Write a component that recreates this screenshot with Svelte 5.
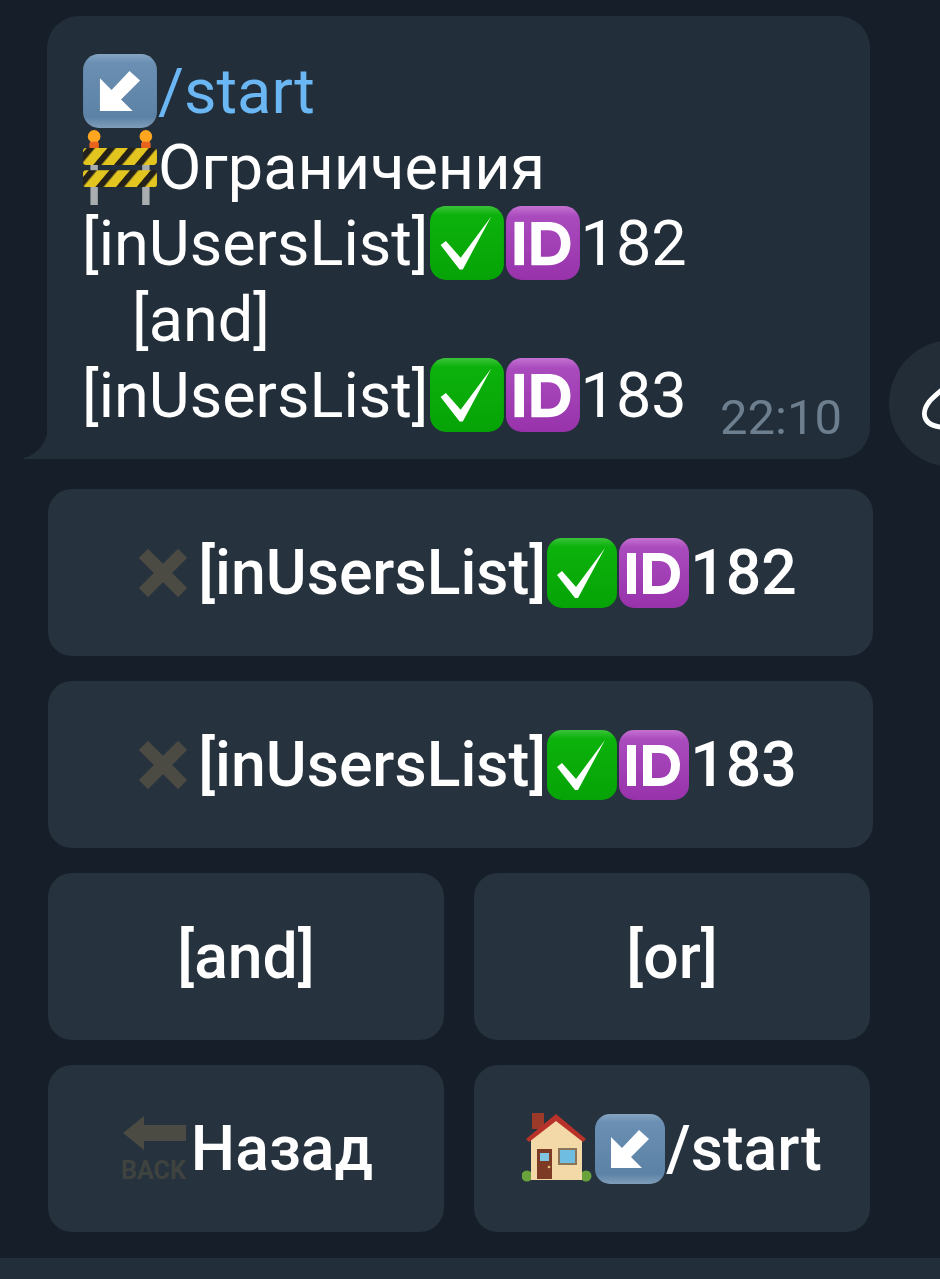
<script lang="ts">
  const conditions = ['182', '183'];
</script>

{#snippet keycap()}
  <svg class="emoji" viewBox="0 0 72 72" aria-hidden="true">
    <defs>
      <linearGradient id="cap" x1="0" y1="0" x2="0" y2="1">
        <stop offset="0" stop-color="#86a5c2" />
        <stop offset="0.12" stop-color="#6a8fb2" />
        <stop offset="0.85" stop-color="#5c82a6" />
        <stop offset="1" stop-color="#7f9db9" />
      </linearGradient>
    </defs>
    <rect x="1" y="1" width="70" height="70" rx="15" fill="url(#cap)" />
    <path d="M17 24 V55 H48 L37 44 L55 26 L45 17 L28 35 Z" fill="#fff" />
  </svg>
{/snippet}

{#snippet barrier()}
  <svg class="emoji" viewBox="0 0 72 72" aria-hidden="true">
    <defs>
      <pattern id="stripes" width="15" height="15" patternUnits="userSpaceOnUse" patternTransform="rotate(40)">
        <rect width="15" height="15" fill="#e3c51f" />
        <rect width="6" height="15" fill="#23211a" />
      </pattern>
    </defs>
    <rect x="8" y="6" width="7" height="66" fill="#a9adb0" />
    <rect x="57" y="6" width="7" height="66" fill="#a9adb0" />
    <circle cx="11.5" cy="7" r="6" fill="#ffa51f" />
    <circle cx="60.5" cy="7" r="6" fill="#ffa51f" />
    <rect x="7" y="12" width="9" height="7" rx="2" fill="#e8641e" />
    <rect x="56" y="12" width="9" height="7" rx="2" fill="#e8641e" />
    <rect x="1" y="18" width="70" height="16" rx="3" fill="url(#stripes)" />
    <rect x="1" y="39" width="70" height="16" rx="3" fill="url(#stripes)" />
  </svg>
{/snippet}

{#snippet check()}
  <svg class="emoji" viewBox="0 0 72 72" aria-hidden="true">
    <defs>
      <linearGradient id="green" x1="0" y1="0" x2="0" y2="1">
        <stop offset="0" stop-color="#3bc33b" />
        <stop offset="0.12" stop-color="#0cb20c" />
        <stop offset="1" stop-color="#06a306" />
      </linearGradient>
    </defs>
    <rect x="1" y="1" width="70" height="70" rx="15" fill="url(#green)" />
    <path d="M11 38 L16 34 L30 50 L59 11 L32 61 L29 61 Z" fill="#fff" />
  </svg>
{/snippet}

{#snippet idBadge()}
  <svg class="emoji" viewBox="0 0 72 72" aria-hidden="true">
    <defs>
      <linearGradient id="purple" x1="0" y1="0" x2="0" y2="1">
        <stop offset="0" stop-color="#c570d2" />
        <stop offset="0.14" stop-color="#a94bbd" />
        <stop offset="1" stop-color="#9832ab" />
      </linearGradient>
    </defs>
    <rect x="1" y="1" width="70" height="70" rx="15" fill="url(#purple)" />
    <rect x="9" y="16" width="9" height="41" fill="#fff" />
    <path d="M25 16 H41 C54 16 62 24 62 36 C62 49 54 57 41 57 H25 Z M34 24 V49 H41 C49 49 53 44 53 36 C53 29 49 24 41 24 Z" fill="#fff" fill-rule="evenodd" />
  </svg>
{/snippet}

{#snippet cross()}
  <svg class="emoji" viewBox="0 0 72 72" aria-hidden="true">
    <path d="M24 21 L54 51 M54 21 L24 51" stroke="#4b4a43" stroke-width="13" stroke-linecap="square" />
  </svg>
{/snippet}

{#snippet back()}
  <svg class="emoji" viewBox="0 0 72 72" aria-hidden="true">
    <path d="M4 20 L25 3 V12 H67 V28 H25 V37 Z" fill="#4b4a43" />
    <text x="2" y="66" class="back-word">BACK</text>
  </svg>
{/snippet}

{#snippet house()}
  <svg class="emoji" viewBox="0 0 72 72" aria-hidden="true">
    <circle cx="5" cy="63" r="5.5" fill="#6aa33c" />
    <circle cx="64" cy="63" r="5.5" fill="#6aa33c" />
    <rect x="10" y="0" width="12" height="16" fill="#9c3a2a" />
    <path d="M34 5 L60 26 V67 H9 V26 Z" fill="#f3d9a8" />
    <path d="M4 26 L34 1 L64 26 L61 29 L34 8 L7 29 Z" fill="#b8322a" />
    <rect x="15" y="36" width="15" height="30" fill="#7d3a24" />
    <rect x="18" y="40" width="9" height="8" fill="#7fc4e0" />
    <rect x="36" y="35" width="19" height="17" fill="#8a7558" />
    <rect x="38" y="37" width="15" height="13" fill="#6fbde0" />
    <circle cx="27" cy="54" r="1.3" fill="#e8c37a" />
  </svg>
{/snippet}

<main class="chat">
  <div class="message-row">
    <article class="bubble">
      <svg class="tail" viewBox="0 0 24 30" aria-hidden="true">
        <path d="M24 0 C23 14 12 26 0 29 L0 30 H24 Z" />
      </svg>
      <div class="line">{@render keycap()}<span class="link">/start</span></div>
      <div class="line">{@render barrier()}<span>Ограничения</span></div>
      <div class="line">
        <span>[inUsersList]</span>{@render check()}{@render idBadge()}<span>182</span>
      </div>
      <div class="line indented"><span>[and]</span></div>
      <div class="line last">
        <span>[inUsersList]</span>{@render check()}{@render idBadge()}<span>183</span>
        <time>22:10</time>
      </div>
    </article>
    <button class="share" aria-label="Поделиться">
      <svg viewBox="0 0 60 60" aria-hidden="true">
        <path d="M36 2 C30 10 14 20 8 28 C2 36 2 44 8 49 C13 53 22 54 36 54" />
      </svg>
    </button>
  </div>

  <div class="keyboard">
    {#each conditions as id}
      <div class="key-row wide">
        <button class="key">
          {@render cross()}
          <span class="gap">[inUsersList]</span>{@render check()}{@render idBadge()}<span>{id}</span>
        </button>
      </div>
    {/each}
    <div class="key-row">
      <button class="key"><span>[and]</span></button>
      <button class="key"><span>[or]</span></button>
    </div>
    <div class="key-row">
      <button class="key">{@render back()}<span>Назад</span></button>
      <button class="key">{@render house()}{@render keycap()}<span>/start</span></button>
    </div>
  </div>
</main>
<div class="bottom-bar"></div>

<style>
  :global(body) {
    margin: 0;
    background: #161f29;
  }
  .chat {
    height: 1258px;
    box-sizing: border-box;
    padding: 16px 0 0 47px;
    overflow: hidden;
    font-family: Roboto, "Noto Sans", sans-serif;
    color: #fff;
  }
  .message-row {
    display: flex;
    align-items: flex-end;
    gap: 19px;
    width: 893px;
  }
  .bubble {
    position: relative;
    flex: none;
    box-sizing: border-box;
    width: 823px;
    height: 443px;
    padding: 37px 28px 0 35px;
    background: #222e39;
    border-radius: 32px 32px 32px 0;
    font-size: 63px;
  }
  .tail {
    position: absolute;
    left: -23px;
    bottom: 0;
    width: 24px;
    height: 30px;
    fill: #222e39;
  }
  .line {
    display: flex;
    align-items: center;
    height: 76px;
    white-space: nowrap;
  }
  .line .emoji {
    width: 76px;
    height: 76px;
  }
  .link {
    color: #6ab7f3;
  }
  .indented {
    padding-left: 50px;
  }
  .last time {
    margin-left: auto;
    align-self: flex-end;
    margin-bottom: -13px;
    font-size: 49px;
    line-height: 56px;
    color: #6d7f8f;
  }
  .emoji {
    flex: none;
    display: block;
    width: 72px;
    height: 72px;
  }
  .back-word {
    font: 700 25px Roboto, sans-serif;
    fill: #3f4340;
  }
  .share {
    flex: none;
    width: 127px;
    height: 127px;
    margin-bottom: -8px;
    padding: 0 0 0 32px;
    border: 0;
    border-radius: 50%;
    background: #222d38;
  }
  .share svg {
    display: block;
    width: 60px;
    height: 60px;
    fill: none;
    stroke: #fff;
    stroke-width: 5;
    stroke-linecap: round;
  }
  .keyboard {
    display: flex;
    flex-direction: column;
    gap: 25px;
    margin: 30px 0 0 1px;
    width: 822px;
  }
  .key-row {
    display: grid;
    grid-auto-flow: column;
    grid-auto-columns: 1fr;
    gap: 30px;
  }
  .key-row.wide {
    width: 825px;
  }
  .key {
    display: flex;
    align-items: center;
    justify-content: center;
    height: 167px;
    padding: 0;
    border: 0;
    border-radius: 24px;
    background: #26323d;
    color: #fff;
    font: 500 62.5px Roboto, "Noto Sans", sans-serif;
  }
  .gap {
    margin-left: 2px;
  }
  .bottom-bar {
    height: 21px;
    background: #232e3b;
  }
</style>
